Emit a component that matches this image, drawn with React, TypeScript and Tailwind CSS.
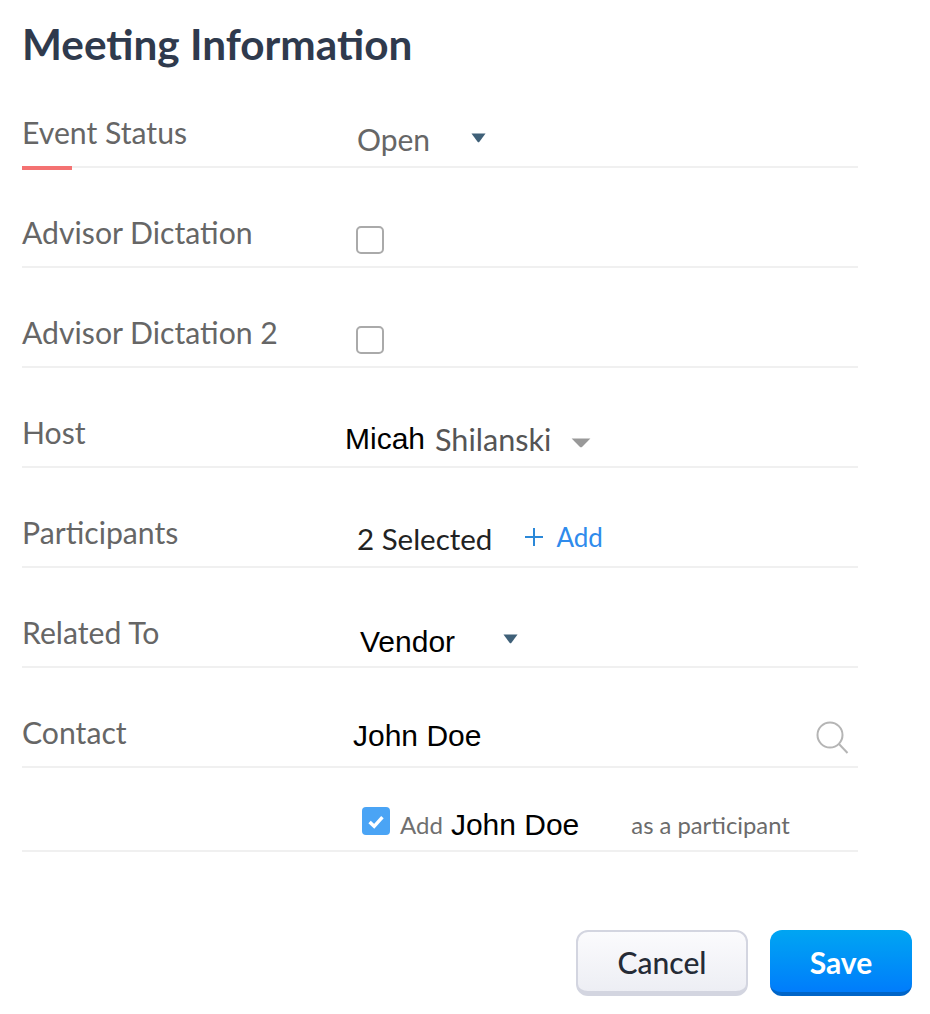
const lato = "font-['Lato',sans-serif]";
const arial = "font-['Liberation_Sans',Arial,sans-serif]";

function Caret({ color = "#3f6078", className = "", width = 15 }: { color?: string; className?: string; width?: number }) {
  return (
    <svg width={width} height="10" viewBox="0 0 16 10" preserveAspectRatio="none" className={className}>
      <path d="M0.5 0.5 H15.5 L9 8.8 Q8 9.8 7 8.8 Z" fill={color} />
    </svg>
  );
}

function EmptyBox() {
  return <div className="w-[28px] h-[28px] ml-[-1px] rounded-[5px] border-2 border-[#aaaaaa] bg-white" />;
}

function Row({ label, active, children }: { label: string; active?: boolean; children?: React.ReactNode }) {
  return (
    <div className="relative flex h-[100px] border-b-2 border-[#f0f0f0]">
      <div className="w-[335px] pt-[44px] text-[30.2px] leading-[40px] text-[#666666]">{label}</div>
      <div className="relative flex-1">{children}</div>
      {active && <div className="absolute left-0 bottom-[-4px] w-[50px] h-[4px] bg-[#f47272]" />}
    </div>
  );
}

export default function App() {
  return (
    <div className={`${lato} w-[930px] h-[1014px] bg-white overflow-hidden pl-[22px]`}>
      <h1 className="text-[42.3px] leading-[50px] font-bold text-[#2f3a4d] pt-[19px] h-[68px]">
        Meeting Information
      </h1>
      <div className="w-[836px]">
        <Row label="Event Status" active>
          <div className="flex items-center pt-[51px]">
            <span className="text-[30px] leading-[40px] text-[#666666]">Open</span>
            <Caret className="ml-[41px] mb-[3px]" />
          </div>
        </Row>
        <Row label="Advisor Dictation">
          <div className="pt-[58px]"><EmptyBox /></div>
        </Row>
        <Row label="Advisor Dictation 2">
          <div className="pt-[58px]"><EmptyBox /></div>
        </Row>
        <Row label="Host">
          <div className="flex items-center pt-[50px] ml-[-12px]">
            <span className={`${arial} text-[30px] leading-[40px] text-black`}>Micah</span>
            <span className="ml-[10px] mt-[2px] text-[30.6px] leading-[40px] text-[#555555]">Shilanski</span>
            <Caret color="#999999" width={20} className="ml-[20px] mt-[8px]" />
          </div>
        </Row>
        <Row label="Participants">
          <div className="flex items-center pt-[49px]">
            <span className="text-[29.5px] leading-[40px] text-[#222222]">2 Selected</span>
            <svg width="20" height="20" viewBox="0 0 20 20" className="ml-[32px] mb-[4px]">
              <path d="M10 1 V19 M1 10 H19" stroke="#2b88d8" strokeWidth="2" />
            </svg>
            <span className="ml-[12px] mb-[4px] text-[26px] leading-[40px] text-[#2f8bec]">Add</span>
          </div>
        </Row>
        <Row label="Related To">
          <div className="flex items-center pt-[54px] pl-[3px]">
            <span className={`${arial} text-[30px] leading-[40px] text-black`}>Vendor</span>
            <Caret className="ml-[48px] mb-[6px]" />
          </div>
        </Row>
        <Row label="Contact">
          <div className="pt-[48px] ml-[-4px]">
            <span className={`${arial} text-[30px] leading-[40px] text-black`}>John Doe</span>
          </div>
          <svg width="34" height="36" viewBox="0 0 34 36" className="absolute right-[9px] top-[52px]">
            <circle cx="15" cy="15" r="12.5" fill="none" stroke="#b5b5b5" strokeWidth="2" />
            <path d="M24 24 L32.5 33" stroke="#b5b5b5" strokeWidth="2" />
          </svg>
        </Row>
        <div className="flex h-[84px] border-b-2 border-[#f0f0f0] pl-[340px] pt-[39px]">
          <div className="flex h-[28px] w-[28px] items-center justify-center rounded-[4px] bg-[#4aa4f5]">
            <svg width="18" height="15" viewBox="0 0 16 14">
              <path d="M2 7.5 L6.3 11.5 L14 3" fill="none" stroke="#ffffff" strokeWidth="3.2" />
            </svg>
          </div>
          <span className="ml-[10px] text-[24px] leading-[36px] text-[#707070]">Add</span>
          <span className={`${arial} ml-[8px] text-[30px] leading-[36px] text-black`}>John Doe</span>
          <span className="ml-[52px] text-[23.8px] leading-[36px] text-[#6b6b6b]">as a participant</span>
        </div>
      </div>
      <div className="flex justify-end gap-[22px] pr-[18px] mt-[78px]">
        <button className="h-[66px] w-[172px] rounded-[12px] border-2 border-b-[5px] border-[#d3d5e0] bg-gradient-to-b from-[#fbfbfd] to-[#edeef4] pt-[2px] text-[30px] font-medium text-[#252b36]">
          Cancel
        </button>
        <button className="h-[66px] w-[142px] rounded-[12px] border-b-[4px] border-[#0065c8] bg-gradient-to-b from-[#00a5f2] to-[#007cfb] pt-[2px] text-[30px] font-bold text-white">
          Save
        </button>
      </div>
    </div>
  );
}
